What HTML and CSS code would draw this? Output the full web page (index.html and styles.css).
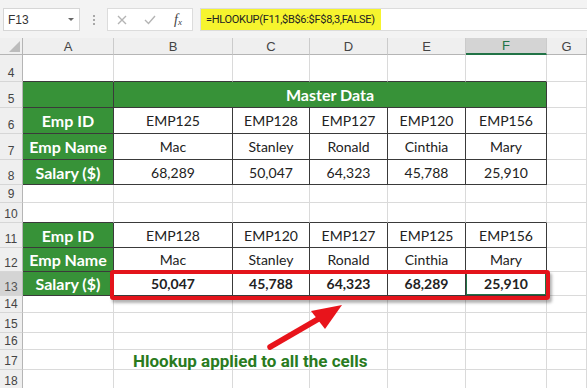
FILE: index.html
```html
<!DOCTYPE html>
<html lang="en">

<head>
    <meta charset="UTF-8">
    <title>HLOOKUP Example</title>
    <link rel="stylesheet" href="styles.css">
</head>

<body>
    <div class="app">
        <div class="toolbar">
            <div class="namebox"><span>F13</span><span class="caret"></span></div>
            <div class="grip"><span></span><span></span><span></span></div>
            <div class="fxbox">
                <span class="tool">
                    <svg width="10" height="10" viewBox="0 0 10 10"><path d="M1 1 L9 9 M9 1 L1 9" stroke="#b4b4b4" stroke-width="1.4" fill="none"/></svg>
                </span>
                <span class="tool">
                    <svg width="12" height="10" viewBox="0 0 12 10"><path d="M1 5 L4.5 8.5 L11 1" stroke="#b4b4b4" stroke-width="1.4" fill="none"/></svg>
                </span>
                <span class="tool fx"><i>f</i><small>x</small></span>
            </div>
            <div class="formula"><span class="hl">=HLOOKUP(F11,$B$6:$F$8,3,FALSE)</span></div>
        </div>

        <div class="sheet">
            <!-- column headers -->
            <div class="c corner"><span></span></div>
            <div class="c ch">A</div>
            <div class="c ch">B</div>
            <div class="c ch">C</div>
            <div class="c ch">D</div>
            <div class="c ch">E</div>
            <div class="c ch sel">F</div>
            <div class="c ch">G</div>

            <!-- row 4 -->
            <div class="c rh">4</div>
            <div class="c above"></div>
            <div class="c above"></div>
            <div class="c above"></div>
            <div class="c above"></div>
            <div class="c above"></div>
            <div class="c above"></div>
            <div class="c"></div>

            <!-- row 5 -->
            <div class="c rh">5</div>
            <div class="c t g"></div>
            <div class="c t g merge">Master Data</div>
            <div class="c"></div>

            <!-- row 6 -->
            <div class="c rh">6</div>
            <div class="c t g">Emp ID</div>
            <div class="c t">EMP125</div>
            <div class="c t">EMP128</div>
            <div class="c t">EMP127</div>
            <div class="c t">EMP120</div>
            <div class="c t">EMP156</div>
            <div class="c"></div>

            <!-- row 7 -->
            <div class="c rh">7</div>
            <div class="c t g">Emp Name</div>
            <div class="c t">Mac</div>
            <div class="c t">Stanley</div>
            <div class="c t">Ronald</div>
            <div class="c t">Cinthia</div>
            <div class="c t">Mary</div>
            <div class="c"></div>

            <!-- row 8 -->
            <div class="c rh">8</div>
            <div class="c t g">Salary ($)</div>
            <div class="c t">68,289</div>
            <div class="c t">50,047</div>
            <div class="c t">64,323</div>
            <div class="c t">45,788</div>
            <div class="c t">25,910</div>
            <div class="c"></div>

            <!-- row 9 -->
            <div class="c rh">9</div>
            <div class="c"></div>
            <div class="c"></div>
            <div class="c"></div>
            <div class="c"></div>
            <div class="c"></div>
            <div class="c"></div>
            <div class="c"></div>

            <!-- row 10 -->
            <div class="c rh">10</div>
            <div class="c above"></div>
            <div class="c above"></div>
            <div class="c above"></div>
            <div class="c above"></div>
            <div class="c above"></div>
            <div class="c above"></div>
            <div class="c"></div>

            <!-- row 11 -->
            <div class="c rh">11</div>
            <div class="c t g">Emp ID</div>
            <div class="c t">EMP128</div>
            <div class="c t">EMP120</div>
            <div class="c t">EMP127</div>
            <div class="c t">EMP125</div>
            <div class="c t">EMP156</div>
            <div class="c"></div>

            <!-- row 12 -->
            <div class="c rh">12</div>
            <div class="c t g">Emp Name</div>
            <div class="c t">Mac</div>
            <div class="c t">Stanley</div>
            <div class="c t">Ronald</div>
            <div class="c t">Cinthia</div>
            <div class="c t">Mary</div>
            <div class="c"></div>

            <!-- row 13 -->
            <div class="c rh rsel">13</div>
            <div class="c t g">Salary ($)</div>
            <div class="c t b">50,047</div>
            <div class="c t b">45,788</div>
            <div class="c t b">64,323</div>
            <div class="c t b">68,289</div>
            <div class="c t b cur">25,910</div>
            <div class="c"></div>

            <!-- rows 14 - 18 -->
            <div class="c rh">14</div>
            <div class="c"></div><div class="c"></div><div class="c"></div><div class="c"></div><div class="c"></div><div class="c"></div><div class="c"></div>
            <div class="c rh">15</div>
            <div class="c"></div><div class="c"></div><div class="c"></div><div class="c"></div><div class="c"></div><div class="c"></div><div class="c"></div>
            <div class="c rh">16</div>
            <div class="c"></div><div class="c"></div><div class="c"></div><div class="c"></div><div class="c"></div><div class="c"></div><div class="c"></div>
            <div class="c rh">17</div>
            <div class="c"></div><div class="c"></div><div class="c"></div><div class="c"></div><div class="c"></div><div class="c"></div><div class="c"></div>
            <div class="c rh">18</div>
            <div class="c"></div><div class="c"></div><div class="c"></div><div class="c"></div><div class="c"></div><div class="c"></div><div class="c"></div>
        </div>

        <!-- annotation -->
        <div class="callout"></div>
        <svg class="arrow" width="587" height="388" viewBox="0 0 587 388">
            <line x1="270" y1="347" x2="320" y2="318" stroke="#e8141b" stroke-width="5.5" stroke-linecap="round"/>
            <polygon points="342,305 311,311 325,329" fill="#e8141b"/>
        </svg>
        <div class="note">Hlookup applied to all the cells</div>
    </div>
</body>

</html>
```

FILE: styles.css
```css
body {
    margin: 0;
    background: #fff;
    font-family: Lato, "Liberation Sans", sans-serif;
}

.app {
    position: relative;
    width: 587px;
    height: 388px;
    overflow: hidden;
}

/* formula bar */
.toolbar {
    height: 38px;
    box-sizing: border-box;
    padding-top: 8px;
    display: flex;
    align-items: flex-start;
    background: #f3f3f3;
}

.namebox {
    margin-left: 3px;
    width: 77px;
    height: 23px;
    box-sizing: border-box;
    padding: 0 5px 0 4px;
    display: flex;
    align-items: center;
    justify-content: space-between;
    background: #fff;
    border: 1px solid #d6d6d6;
    font: 12px "Liberation Sans", sans-serif;
    color: #333;
}

.caret {
    width: 0;
    height: 0;
    border-left: 3px solid transparent;
    border-right: 3px solid transparent;
    border-top: 3px solid #666;
}

.grip {
    width: 27px;
    height: 23px;
    display: flex;
    flex-direction: column;
    align-items: center;
    justify-content: center;
    gap: 2px;
}

.grip span {
    width: 2px;
    height: 2px;
    background: #a8a8a8;
}

.fxbox {
    width: 86px;
    height: 23px;
    box-sizing: border-box;
    display: flex;
    align-items: center;
    background: #fff;
    border: 1px solid #dcdcdc;
}

.tool {
    width: 28px;
    display: flex;
    justify-content: center;
    align-items: center;
}

.fx {
    font: 14px "Liberation Serif", serif;
    color: #444;
}

.fx small {
    font-size: 9px;
    margin-top: 5px;
    font-style: italic;
}

.formula {
    flex: 1;
    margin-left: 7px;
    height: 23px;
    box-sizing: border-box;
    display: flex;
    background: #fff;
    border: 1px solid #dcdcdc;
    border-right: none;
}

.hl {
    width: 180px;
    box-sizing: border-box;
    padding-left: 5px;
    display: flex;
    align-items: center;
    background: #f6f42e;
    font: 11px Roboto, sans-serif;
    letter-spacing: -0.3px;
    color: #222;
    white-space: nowrap;
}

/* grid */
.sheet {
    display: grid;
    grid-template-columns: 23px 91px 119px 77px 78px 78px 81px 1fr;
    grid-template-rows: 17px 27px 26px 26px 26px 25px 18px 20px 25px 24px 24px 17px 20px 17px 20px 20px;
}

.c {
    box-sizing: border-box;
    border-right: 1px solid #dadada;
    border-bottom: 1px solid #dadada;
    display: flex;
    align-items: center;
    justify-content: center;
    font-size: 14px;
    color: #222;
    white-space: nowrap;
}

.ch {
    background: #efefef;
    border-right-color: #cbcbcb;
    border-bottom-color: #b5b5b5;
    font: 13px "Liberation Sans", sans-serif;
    color: #444;
}

.ch.sel {
    background: #d4d4d4;
    border-bottom: 2px solid #217346;
    color: #217346;
}

.corner {
    background: #efefef;
    border-right-color: #b5b5b5;
    border-bottom-color: #b5b5b5;
    align-items: flex-end;
    justify-content: flex-end;
}

.corner span {
    width: 11px;
    height: 11px;
    margin: 0 2px 2px 0;
    background: #bcbcbc;
    clip-path: polygon(100% 0, 100% 100%, 0 100%);
}

.rh {
    background: #efefef;
    border-right-color: #b5b5b5;
    border-bottom-color: #d6d6d6;
    align-items: flex-end;
    padding-bottom: 1px;
    font: 12px "Liberation Sans", sans-serif;
    color: #444;
}

.rh.rsel {
    background: #d4d4d4;
    color: #555;
}

.above {
    border-bottom-color: #3a3a3a;
}

.t {
    border-right-color: #3a3a3a;
    border-bottom-color: #3a3a3a;
}

.g {
    background: #379238;
    color: #fff;
    font-size: 16px;
    font-weight: bold;
}

.merge {
    grid-column: span 5;
}

.b {
    font-weight: bold;
}

.cur {
    box-shadow: inset 0 0 0 1px #217346;
}

/* annotation */
.callout {
    position: absolute;
    left: 110px;
    top: 270px;
    width: 440px;
    height: 30px;
    box-sizing: border-box;
    border: 4px solid #e3141b;
    border-radius: 3px;
    box-shadow: 2px 3px 3px rgba(0, 0, 0, 0.3);
}

.arrow {
    position: absolute;
    left: 0;
    top: 0;
}

.note {
    position: absolute;
    left: 133px;
    top: 351px;
    font: bold 17px Roboto, sans-serif;
    color: #2a7b1e;
    line-height: 20px;
}
```
